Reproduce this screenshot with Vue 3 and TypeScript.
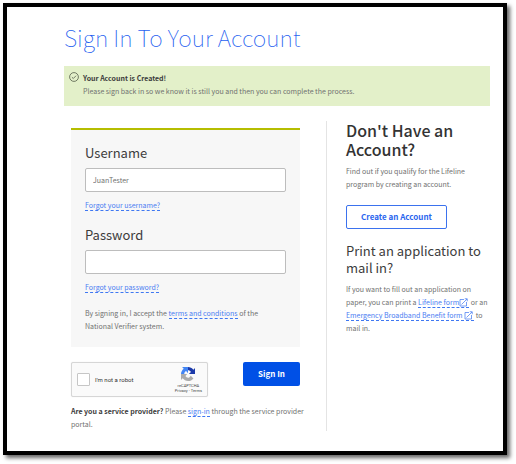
<script setup lang="ts">
import { ref } from 'vue'

const username = ref('JuanTester')
const password = ref('')
const notRobot = ref(false)
</script>

<template>
  <div class="frame">
    <h1>Sign In To Your Account</h1>

    <div class="alert" role="status">
      <svg class="alert-icon" viewBox="0 0 20 20" aria-hidden="true">
        <circle cx="10" cy="10" r="8.8" />
        <path d="M5.8 10.4l2.8 2.6 5.6-5.6" />
      </svg>
      <div>
        <strong>Your Account is Created!</strong>
        <p>Please sign back in so we know it is still you and then you can complete the process.</p>
      </div>
    </div>

    <main class="columns">
      <form class="sign-in" @submit.prevent>
        <div class="panel">
          <label for="username">Username</label>
          <input id="username" v-model="username" class="field" type="text" autocomplete="off" />
          <p class="forgot"><a href="#">Forgot your username?</a></p>
          <label for="password">Password</label>
          <input id="password" v-model="password" class="field" type="password" autocomplete="off" />
          <p class="forgot"><a href="#">Forgot your password?</a></p>
          <p>
            By signing in, I accept the <a href="#">terms and conditions</a> of the National Verifier system.
          </p>
        </div>

        <div class="actions">
          <div class="captcha">
            <input id="robot" v-model="notRobot" type="checkbox" />
            <label for="robot">I'm not a robot</label>
            <div class="captcha-brand">
              <svg viewBox="0 0 64 64" aria-hidden="true">
                <path fill="#1c3aa9" d="M64 31.9V4.8l-7.5 7.5C50.4 4.8 41.7 0 32 0v14.9c5.9 0 10.6 3 13.5 8.4L36 32z" />
                <path fill="#4285f4" d="M31.9 0H4.9l7.5 7.5C4.9 13.6 0 22.2 0 32h14.9c0-5.9 3-10.6 8.4-13.5L32 28z" />
                <path fill="#ababab" d="M0 32v27.1l7.5-7.5C13.6 59.1 22.2 64 32 64c10.1 0 19.2-4.7 25-12L44.7 39.6c-3.2 5.9-7.7 9.3-12.7 9.3-4.3 0-8.7-2.2-11.5-7.2L28 32z" />
              </svg>
              <span>reCAPTCHA</span>
              <span>Privacy - Terms</span>
            </div>
          </div>
          <button class="primary" type="submit">Sign In</button>
        </div>

        <p>
          <strong>Are you a service provider?</strong> Please <a href="#">sign-in</a> through the service provider
          portal.
        </p>
      </form>

      <aside>
        <h2>Don't Have an Account?</h2>
        <p>Find out if you qualify for the Lifeline program by creating an account.</p>
        <button class="secondary" type="button">Create an Account</button>
        <h3>Print an application to mail in?</h3>
        <p>
          If you want to fill out an application on paper, you can print a
          <a href="#">Lifeline form<svg class="external" viewBox="0 0 18 18" aria-hidden="true"><path d="M10 3H2v13h13V8M5 13L16 2M11.5 1.5h5v5" /></svg></a>
          or an
          <a href="#">Emergency Broadband Benefit form <svg class="external" viewBox="0 0 18 18" aria-hidden="true"><path d="M10 3H2v13h13V8M5 13L16 2M11.5 1.5h5v5" /></svg></a>
          to mail in.
        </p>
      </aside>
    </main>
  </div>
</template>

<style>
body {
  background: #fff;
}
</style>

<style scoped>
.frame {
  box-sizing: border-box;
  margin: 3px 9px 9px 3px;
  padding: 14px 13px 20px 57px;
  border: 4px solid #000;
  background: #fff;
  box-shadow: 3px 3px 4px rgba(0, 0, 0, 0.6);
  color: #707070;
  font-family: "Noto Sans CJK SC", "Noto Sans", sans-serif;
  font-size: 7px;
  font-weight: 400;
  line-height: 13px;
}

h1,
h2,
h3,
p {
  margin: 0;
}

h1 {
  color: #1f5ff0;
  font-size: 23px;
  font-weight: 100;
  line-height: 32px;
}

a {
  border-bottom: 1px dashed #3f78f2;
  color: #4a7df2;
  text-decoration: none;
}

strong {
  color: #3c3c3c;
  font-weight: 700;
}

.alert {
  display: flex;
  gap: 4px;
  margin-top: 13px;
  padding: 6px 5px 8px;
  background: #e3f0c9;
}

.alert-icon {
  flex: none;
  width: 10px;
  height: 10px;
  fill: none;
  stroke: #4c5443;
  stroke-width: 1.5;
}

.columns {
  display: grid;
  grid-template-columns: 263px minmax(0, 1fr);
  margin-top: 15px;
}

.sign-in {
  padding: 7px 15px 0 7px;
  border-right: 1px solid #e4e4e4;
}

.panel {
  margin-right: 11px;
  padding: 13px 14px 14px;
  border-top: 2px solid #b5bd00;
  background: #f7f7f7;
}

.panel label {
  display: block;
  color: #3c3c3c;
  font-size: 13px;
  line-height: 20px;
}

.field {
  box-sizing: border-box;
  display: block;
  width: 100%;
  height: 24px;
  margin: 5px 0 7px;
  padding: 0 7px;
  border: 1px solid #bdbdbd;
  border-radius: 2px;
  background: #fff;
  color: #707070;
  font: inherit;
}

.forgot {
  margin-bottom: 13px;
}

.actions {
  display: flex;
  align-items: flex-start;
  justify-content: space-between;
  margin: 15px 11px 8px 0;
}

.captcha {
  box-sizing: border-box;
  display: flex;
  align-items: center;
  width: 137px;
  height: 35px;
  padding: 0 5px;
  border: 1px solid #d6d6d6;
  border-radius: 2px;
  background: #fafafa;
  box-shadow: 0 0 1px rgba(0, 0, 0, 0.15);
  color: #333;
  font-family: Roboto, sans-serif;
  font-size: 6px;
}

.captcha input {
  appearance: none;
  box-sizing: border-box;
  width: 13px;
  height: 13px;
  margin: 0 5px 0 0;
  border: 1px solid #c6c6c6;
  border-radius: 1px;
  background: #fff;
}

.captcha-brand {
  display: flex;
  flex-direction: column;
  align-items: center;
  margin-left: auto;
  color: #444;
  font-size: 4px;
  line-height: 5px;
}

.captcha-brand svg {
  width: 14px;
  height: 14px;
  margin-bottom: 2px;
}

button {
  box-sizing: border-box;
  height: 24px;
  padding: 0 0 1px;
  border-radius: 2px;
  font-family: inherit;
  font-size: 8px;
  font-weight: 700;
}

.primary {
  width: 57px;
  border: 0;
  background: #0050e6;
  color: #fff;
}

.secondary {
  display: block;
  width: 101px;
  margin: 14px 0 13px;
  border: 1px solid #3b72ee;
  background: #fff;
  color: #2a66ee;
}

aside {
  padding-left: 19px;
}

h2 {
  margin-bottom: 6px;
  color: #333;
  font-size: 16px;
  font-weight: 500;
  line-height: 19px;
}

h3 {
  margin-bottom: 7px;
  color: #3c3c3c;
  font-size: 13px;
  font-weight: 400;
  line-height: 17px;
}

.external {
  width: 9px;
  height: 9px;
  margin: 0 1px 0 0;
  fill: none;
  stroke: currentColor;
  stroke-width: 1.5;
  vertical-align: -2px;
}
</style>
